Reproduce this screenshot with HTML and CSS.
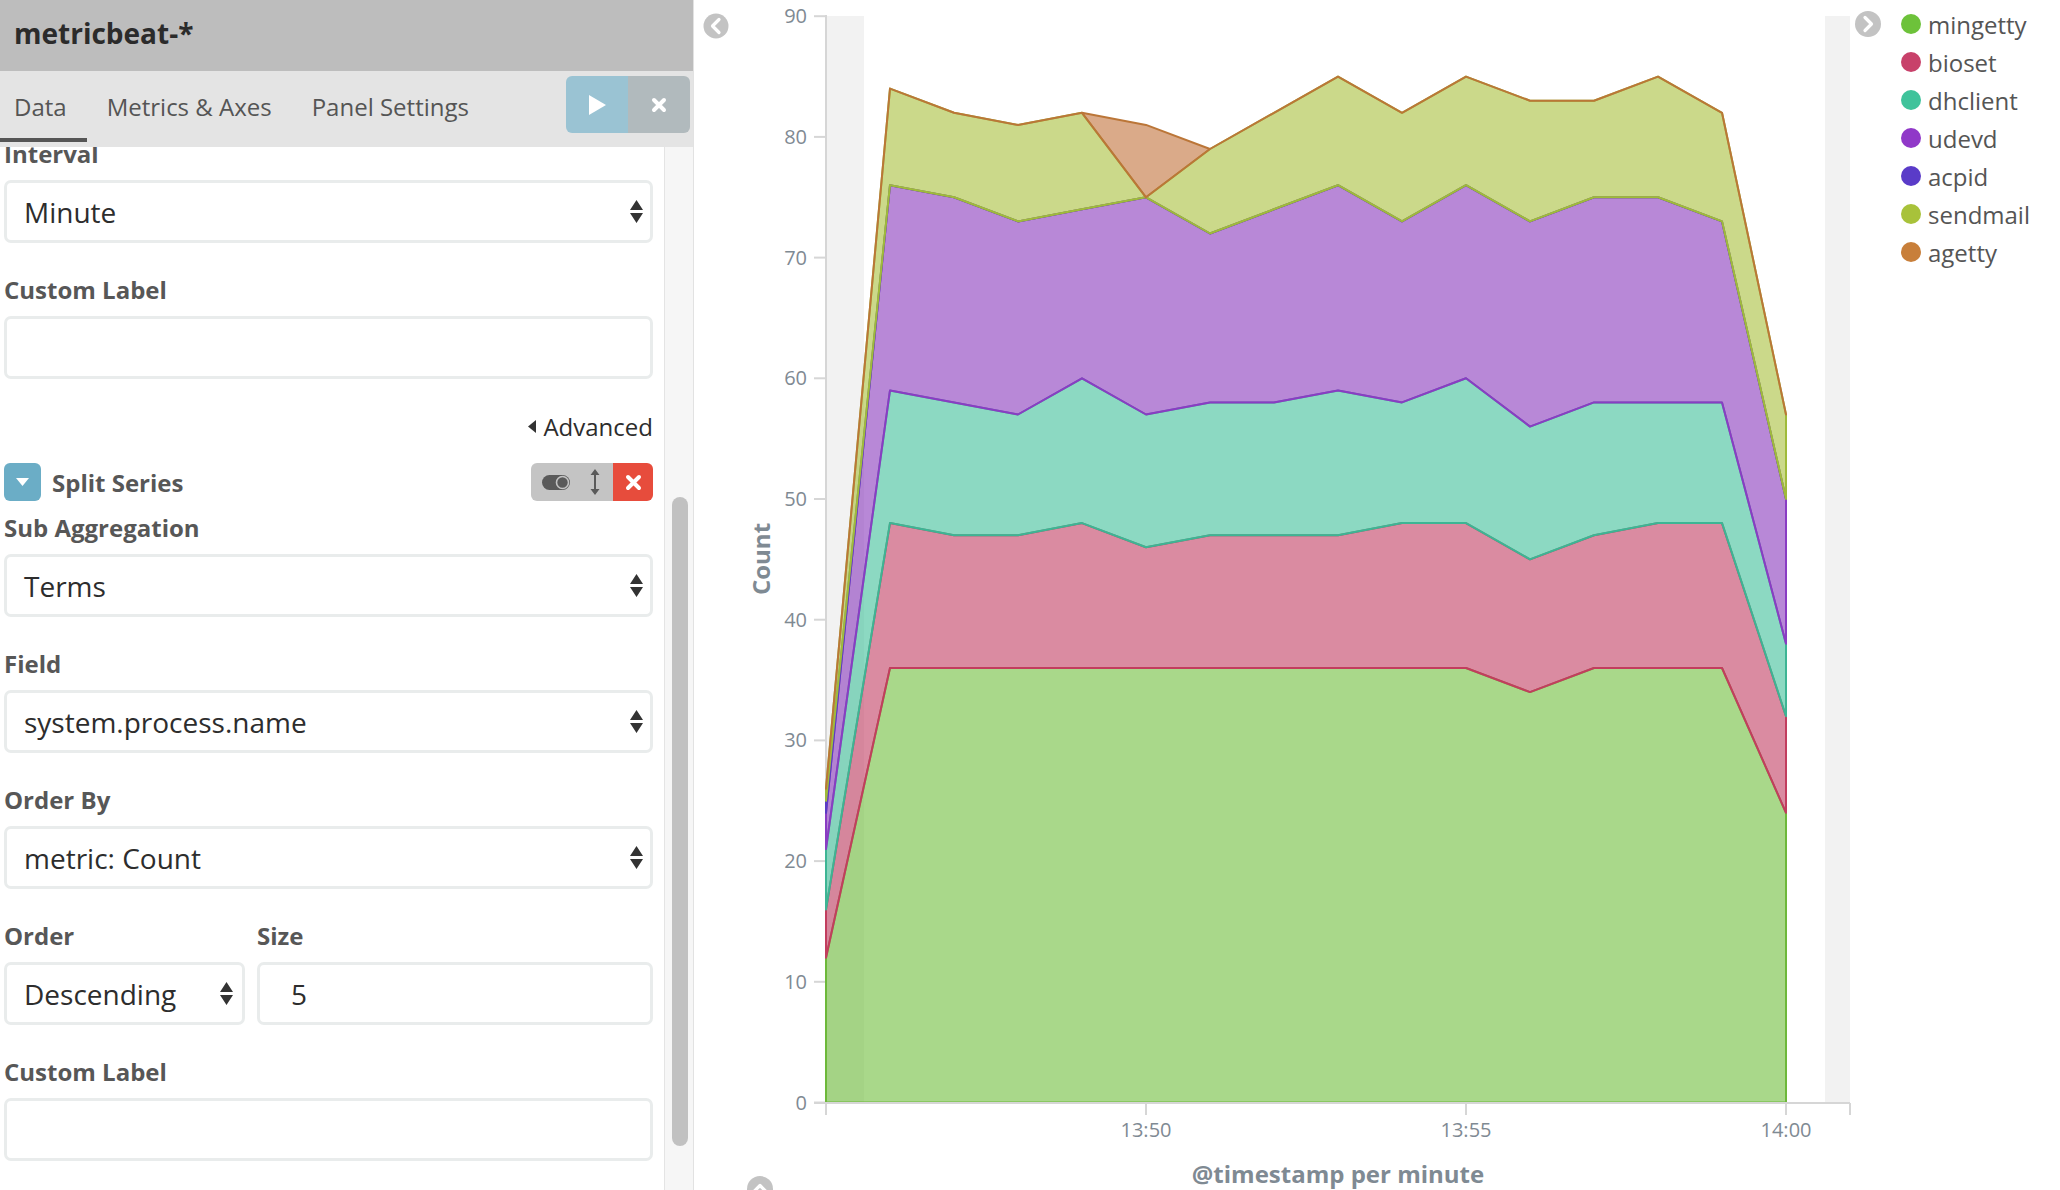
FILE: index.html
```html
<!DOCTYPE html>
<html>
<head>
<meta charset="utf-8">
<title>metricbeat-*</title>
<link rel="stylesheet" href="styles.css">
</head>
<body>
<div class="app">
  <aside class="sidebar">
    <div class="sb-header"><span class="title">metricbeat-*</span></div>
    <div class="sb-tabs">
      <nav class="tabs">
        <span class="tab active">Data</span>
        <span class="tab">Metrics &amp; Axes</span>
        <span class="tab">Panel Settings</span>
      </nav>
      <div class="actions">
        <span class="btn btn-apply"><svg width="20" height="22" viewBox="0 0 20 22"><path d="M2 1 L19 11 L2 21 Z" fill="#fff"/></svg></span>
        <span class="btn btn-discard"><svg width="16" height="16" viewBox="0 0 16 16"><path d="M3 3 L13 13 M13 3 L3 13" stroke="#fff" stroke-width="4" stroke-linecap="round"/></svg></span>
      </div>
    </div>
    <div class="sb-body">
      <div class="form">
        <div class="group first">
          <span class="label">Interval</span>
          <div class="field"><span class="val">Minute</span><svg class="arr" width="13" height="23" viewBox="0 0 13 23"><path d="M6.5 0 L13 10 L0 10 Z M0 13 L13 13 L6.5 23 Z" fill="#333"/></svg></div>
        </div>
        <div class="group">
          <span class="label">Custom Label</span>
          <div class="field input"></div>
        </div>
        <div class="adv"><svg width="8" height="13" viewBox="0 0 8 13"><path d="M8 0 L0 6.5 L8 13 Z" fill="#333"/></svg><span>Advanced</span></div>
        <div class="split">
          <span class="split-btn"><svg width="13" height="8" viewBox="0 0 13 8"><path d="M0 0 H13 L6.5 8 Z" fill="#fff"/></svg></span>
          <span class="split-title">Split Series</span>
          <div class="ctrls">
            <span class="ctrl-gray">
              <svg width="28" height="15" viewBox="0 0 28 15"><rect x="0" y="0" width="28" height="15" rx="7.5" fill="#5a5a5a"/><circle cx="20.5" cy="7.5" r="6" fill="#5a5a5a" stroke="#c4c4c4" stroke-width="1.6"/></svg>
              <svg width="10" height="26" viewBox="0 0 10 26"><path d="M5 3 V23" stroke="#5a5a5a" stroke-width="2"/><path d="M0.5 6 L5 0 L9.5 6 Z M0.5 20 L5 26 L9.5 20 Z" fill="#5a5a5a"/></svg>
            </span>
            <span class="ctrl-red"><svg width="17" height="17" viewBox="0 0 17 17"><path d="M3 3 L14 14 M14 3 L3 14" stroke="#fff" stroke-width="4" stroke-linecap="round"/></svg></span>
          </div>
        </div>
        <div class="group">
          <span class="label">Sub Aggregation</span>
          <div class="field"><span class="val">Terms</span><svg class="arr" width="13" height="23" viewBox="0 0 13 23"><path d="M6.5 0 L13 10 L0 10 Z M0 13 L13 13 L6.5 23 Z" fill="#333"/></svg></div>
        </div>
        <div class="group">
          <span class="label">Field</span>
          <div class="field"><span class="val">system.process.name</span><svg class="arr" width="13" height="23" viewBox="0 0 13 23"><path d="M6.5 0 L13 10 L0 10 Z M0 13 L13 13 L6.5 23 Z" fill="#333"/></svg></div>
        </div>
        <div class="group">
          <span class="label">Order By</span>
          <div class="field"><span class="val">metric: Count</span><svg class="arr" width="13" height="23" viewBox="0 0 13 23"><path d="M6.5 0 L13 10 L0 10 Z M0 13 L13 13 L6.5 23 Z" fill="#333"/></svg></div>
        </div>
        <div class="group row2">
          <div class="col-order">
            <span class="label">Order</span>
            <div class="field narrow"><span class="val">Descending</span><svg class="arr" width="13" height="23" viewBox="0 0 13 23"><path d="M6.5 0 L13 10 L0 10 Z M0 13 L13 13 L6.5 23 Z" fill="#333"/></svg></div>
          </div>
          <div class="col-size">
            <span class="label">Size</span>
            <div class="field input"><span class="val">5</span></div>
          </div>
        </div>
        <div class="group">
          <span class="label">Custom Label</span>
          <div class="field input"></div>
        </div>
      </div>
      <div class="scroll"><div class="thumb"></div></div>
    </div>
  </aside>
  <main class="chart">
    <svg class="plot" width="1366" height="1190" viewBox="694 0 1366 1190">
      <rect x="827" y="16" width="37" height="1087" fill="#f2f2f2"/>
      <rect x="1825" y="16" width="25" height="1087" fill="#f2f2f2"/>
      <g class="ticks" stroke="#d6d6d6" stroke-width="2">
        <line x1="826" y1="15" x2="826" y2="1104"/>
        <line x1="814" y1="1102.5" x2="826" y2="1102.5"/>
        <line x1="814" y1="981.8" x2="826" y2="981.8"/>
        <line x1="814" y1="861.1" x2="826" y2="861.1"/>
        <line x1="814" y1="740.4" x2="826" y2="740.4"/>
        <line x1="814" y1="619.7" x2="826" y2="619.7"/>
        <line x1="814" y1="499" x2="826" y2="499"/>
        <line x1="814" y1="378.3" x2="826" y2="378.3"/>
        <line x1="814" y1="257.6" x2="826" y2="257.6"/>
        <line x1="814" y1="136.9" x2="826" y2="136.9"/>
        <line x1="814" y1="16.2" x2="826" y2="16.2"/>
      </g>
      <g class="ylab">
        <text x="807" y="1109.5">0</text>
        <text x="807" y="988.8">10</text>
        <text x="807" y="868.1">20</text>
        <text x="807" y="747.4">30</text>
        <text x="807" y="626.7">40</text>
        <text x="807" y="506">50</text>
        <text x="807" y="385.3">60</text>
        <text x="807" y="264.6">70</text>
        <text x="807" y="143.9">80</text>
        <text x="807" y="23.2">90</text>
      </g>
      <g class="areas" stroke-width="2" stroke-linejoin="round" fill-opacity="0.6">
        <polygon fill="#6fbe3c" stroke="#6db83a" points="826,957.7 890,668 954,668 1018,668 1082,668 1146,668 1210,668 1274,668 1338,668 1402,668 1466,668 1530,692.1 1594,668 1658,668 1722,668 1786,812.8 1786,1102.5 826,1102.5"/>
        <polygon fill="#c23d63" stroke="#c23d5e" points="826,909.4 890,523.1 954,535.2 1018,535.2 1082,523.1 1146,547.3 1210,535.2 1274,535.2 1338,535.2 1402,523.1 1466,523.1 1530,559.4 1594,535.2 1658,523.1 1722,523.1 1786,716.3 1786,812.8 1722,668 1658,668 1594,668 1530,692.1 1466,668 1402,668 1338,668 1274,668 1210,668 1146,668 1082,668 1018,668 954,668 890,668 826,957.7"/>
        <polygon fill="#3fc09a" stroke="#3db594" points="826,849 890,390.4 954,402.4 1018,414.5 1082,378.3 1146,414.5 1210,402.4 1274,402.4 1338,390.4 1402,402.4 1466,378.3 1530,426.6 1594,402.4 1658,402.4 1722,402.4 1786,643.8 1786,716.3 1722,523.1 1658,523.1 1594,535.2 1530,559.4 1466,523.1 1402,523.1 1338,535.2 1274,535.2 1210,535.2 1146,547.3 1082,523.1 1018,535.2 954,535.2 890,523.1 826,909.4"/>
        <polygon fill="#8939bd" stroke="#8a3cc3" points="826,812.8 890,185.2 954,197.3 1018,221.4 1082,209.3 1146,197.3 1210,233.5 1274,209.3 1338,185.2 1402,221.4 1466,185.2 1530,221.4 1594,197.3 1658,197.3 1722,221.4 1786,499 1786,643.8 1722,402.4 1658,402.4 1594,402.4 1530,426.6 1466,378.3 1402,402.4 1338,390.4 1274,402.4 1210,402.4 1146,414.5 1082,378.3 1018,414.5 954,402.4 890,390.4 826,849"/>
        <polygon fill="#5b3ac4" stroke="#5a3bc4" points="826,800.8 890,185.2 954,197.3 1018,221.4 1082,209.3 1146,197.3 1210,233.5 1274,209.3 1338,185.2 1402,221.4 1466,185.2 1530,221.4 1594,197.3 1658,197.3 1722,221.4 1786,499 1786,499 1722,221.4 1658,197.3 1594,197.3 1530,221.4 1466,185.2 1402,221.4 1338,185.2 1274,209.3 1210,233.5 1146,197.3 1082,209.3 1018,221.4 954,197.3 890,185.2 826,812.8"/>
        <polygon fill="#a8c03c" stroke="#9fbb3a" points="826,788.7 890,88.6 954,112.8 1018,124.9 1082,112.8 1146,197.3 1210,149 1274,112.8 1338,76.6 1402,112.8 1466,76.6 1530,100.7 1594,100.7 1658,76.6 1722,112.8 1786,414.5 1786,499 1722,221.4 1658,197.3 1594,197.3 1530,221.4 1466,185.2 1402,221.4 1338,185.2 1274,209.3 1210,233.5 1146,197.3 1082,209.3 1018,221.4 954,197.3 890,185.2 826,800.8"/>
        <polygon fill="#c1713a" stroke="#bb7638" points="826,788.7 890,88.6 954,112.8 1018,124.9 1082,112.8 1146,124.9 1210,149 1274,112.8 1338,76.6 1402,112.8 1466,76.6 1530,100.7 1594,100.7 1658,76.6 1722,112.8 1786,414.5 1786,414.5 1722,112.8 1658,76.6 1594,100.7 1530,100.7 1466,76.6 1402,112.8 1338,76.6 1274,112.8 1210,149 1146,197.3 1082,112.8 1018,124.9 954,112.8 890,88.6 826,788.7"/>
      </g>
      <g stroke="#d6d6d6" stroke-width="2">
        <line x1="814" y1="1103" x2="1850" y2="1103"/>
        <line x1="826" y1="1103" x2="826" y2="1115"/>
        <line x1="1146" y1="1103" x2="1146" y2="1115"/>
        <line x1="1466" y1="1103" x2="1466" y2="1115"/>
        <line x1="1786" y1="1103" x2="1786" y2="1115"/>
        <line x1="1850" y1="1103" x2="1850" y2="1115"/>
      </g>
      <g class="xlab">
        <text x="1146" y="1137">13:50</text>
        <text x="1466" y="1137">13:55</text>
        <text x="1786" y="1137">14:00</text>
      </g>
      <text class="axis-title" x="1338" y="1183">@timestamp per minute</text>
      <text class="axis-title" transform="translate(770 559) rotate(-90)" x="0" y="0">Count</text>
      <g class="chev">
        <circle cx="716" cy="26" r="12.5" fill="#c3c3c3"/>
        <path d="M719 19.5 L712.5 26 L719 32.5" fill="none" stroke="#fff" stroke-width="3.2" stroke-linecap="round" stroke-linejoin="round"/>
        <circle cx="1868" cy="24" r="13" fill="#c3c3c3"/>
        <path d="M1865 17.5 L1871.5 24 L1865 30.5" fill="none" stroke="#fff" stroke-width="3.2" stroke-linecap="round" stroke-linejoin="round"/>
        <circle cx="760" cy="1189" r="13" fill="#c3c3c3"/>
        <path d="M753.5 1192 L760 1185.5 L766.5 1192" fill="none" stroke="#fff" stroke-width="3.2" stroke-linecap="round" stroke-linejoin="round"/>
      </g>
    </svg>
    <ul class="legend">
      <li><span class="dot dot-mingetty"></span>mingetty</li>
      <li><span class="dot dot-bioset"></span>bioset</li>
      <li><span class="dot dot-dhclient"></span>dhclient</li>
      <li><span class="dot dot-udevd"></span>udevd</li>
      <li><span class="dot dot-acpid"></span>acpid</li>
      <li><span class="dot dot-sendmail"></span>sendmail</li>
      <li><span class="dot dot-agetty"></span>agetty</li>
    </ul>
  </main>
</div>
</body>
</html>
```

FILE: styles.css
```css
* { box-sizing: border-box; margin: 0; padding: 0; }
html, body { width: 2060px; height: 1190px; overflow: hidden; background: #fff; }
body { font-family: "Open Sans", "Liberation Sans", sans-serif; color: #2d2d2d; }

.app { display: flex; width: 2060px; height: 1190px; }

/* sidebar */
.sidebar { width: 694px; flex: none; display: flex; flex-direction: column; border-right: 1px solid #e2e2e2; }
.sb-header { height: 71px; flex: none; background: #bdbdbd; display: flex; align-items: center; padding: 0 0 5px 14px; }
.title { font-size: 28px; font-weight: 700; color: #2b2b2b; }

.sb-tabs { height: 76px; flex: none; background: #e4e4e4; display: flex; align-items: flex-start; }
.tabs { display: flex; }
.tab { height: 71px; line-height: 71px; font-size: 24px; color: #555; padding: 0 20px; white-space: nowrap; }
.tab:first-child { padding-left: 14px; }
.tab.active { box-shadow: inset 0 -4px 0 #555; }
.actions { margin-left: auto; margin-right: 3px; margin-top: 5px; display: flex; height: 57px; }
.btn { width: 62px; display: flex; align-items: center; justify-content: center; }
.btn-apply { background: #9ac3d3; border-radius: 6px 0 0 6px; }
.btn-discard { background: #b1babd; border-radius: 0 6px 6px 0; }

.sb-body { flex: 1; display: flex; min-height: 0; background: #fff; }
.form { width: 664px; flex: none; padding: 0 11px 0 4px; overflow: hidden; }
.scroll { width: 29px; flex: none; background: #f6f6f6; border-left: 1px solid #e4e4e4; padding: 350px 0 0 7px; }
.thumb { width: 16px; height: 649px; background: #c1c1c1; border-radius: 8px; }

.group { margin-bottom: 31px; }
.group.first { margin-top: -9px; }
.label { display: block; font-size: 24px; font-weight: 700; color: #575757; line-height: 32px; margin-bottom: 10px; white-space: nowrap; }
.field { height: 63px; border: 3px solid #e9ecec; border-radius: 7px; display: flex; align-items: center; padding: 0 7px 0 17px; font-size: 28px; color: #2d2d2d; background: #fff; }
.field .val { flex: 1; white-space: nowrap; }
.field.input { padding-left: 31px; }
.field.narrow { padding-right: 9px; }
.arr { flex: none; }

.row2 { display: flex; gap: 12px; }
.col-order { width: 241px; flex: none; }
.col-size { flex: 1; }

.adv { display: flex; justify-content: flex-end; align-items: center; gap: 7px; height: 32px; font-size: 24px; color: #2d2d2d; margin-bottom: 21px; }

.split { display: flex; align-items: center; height: 38px; margin-bottom: 11px; }
.split-btn { width: 37px; height: 38px; background: #6badc6; border-radius: 6px; display: flex; align-items: center; justify-content: center; }
.split-title { margin-left: 11px; font-size: 24px; font-weight: 700; color: #575757; }
.ctrls { margin-left: auto; display: flex; height: 38px; border-radius: 6px; overflow: hidden; }
.ctrl-gray { width: 82px; background: #c4c4c4; display: flex; align-items: center; padding-left: 11px; gap: 20px; }
.ctrl-red { width: 40px; background: #e74c3c; display: flex; align-items: center; justify-content: center; }

/* chart */
.chart { flex: 1; position: relative; background: #fff; }
.plot { display: block; }
.ylab text { font-family: "Open Sans", sans-serif; font-size: 20px; fill: #7f8a93; text-anchor: end; }
.xlab text { font-family: "Open Sans", sans-serif; font-size: 20px; fill: #7f8a93; text-anchor: middle; }
.axis-title { font-family: "Open Sans", sans-serif; font-size: 24px; font-weight: 700; fill: #7f8a93; text-anchor: middle; }

.legend { position: absolute; left: 1207px; top: 5px; list-style: none; }
.legend li { height: 38px; display: flex; align-items: center; gap: 7px; font-size: 24px; color: #555; white-space: nowrap; }
.dot { width: 20px; height: 20px; border-radius: 50%; flex: none; }
.dot-mingetty { background: #6dc23a; }
.dot-bioset { background: #c8416a; }
.dot-dhclient { background: #3fc39b; }
.dot-udevd { background: #9038c8; }
.dot-acpid { background: #5a3bc8; }
.dot-sendmail { background: #a8c23a; }
.dot-agetty { background: #c87f3a; }
```
